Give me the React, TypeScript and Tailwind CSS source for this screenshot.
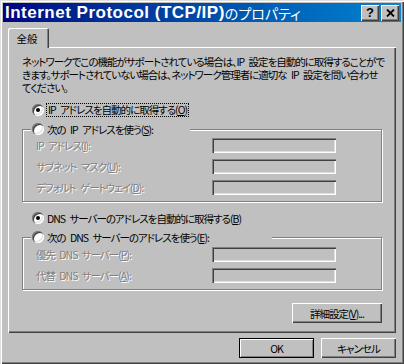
import React from 'react';

const jp = "font-['Noto_Sans_CJK_JP',sans-serif] [font-feature-settings:'palt']";
const dis = 'text-[#808080] [text-shadow:1px_1px_0_#ffffff]';
const raised =
  'bg-[#c0c0c0] shadow-[inset_1px_1px_0_#ffffff,inset_-1px_-1px_0_#404040,inset_-2px_-2px_0_#808080]';
const sunken =
  'bg-[#c0c0c0] shadow-[inset_1px_1px_0_#808080,inset_2px_2px_0_#404040,inset_-1px_-1px_0_#ffffff,inset_-2px_-2px_0_#dfdfdf]';
const etched = 'border border-[#808080] shadow-[inset_1px_1px_0_#ffffff,1px_1px_0_#ffffff]';

function Radio({ checked = false }: { checked?: boolean }) {
  return (
    <span className="flex items-center justify-center w-[12px] h-[12px] shrink-0 rounded-full bg-white shadow-[inset_1px_1px_0_#808080,inset_2px_2px_0_#404040,inset_-1px_-1px_0_#ffffff,inset_-2px_-2px_0_#dfdfdf]">
      {checked && <span className="w-[4px] h-[4px] rounded-full bg-black" />}
    </span>
  );
}

function FieldRow({ label }: { label: React.ReactNode }) {
  return (
    <div className="flex items-center h-[15px]">
      <span className={`w-[176px] whitespace-nowrap ${dis}`}>{label}</span>
      <div className={`w-[124px] h-[15px] ${sunken}`} />
    </div>
  );
}

function GroupHead({ width, children }: { width: string; children: React.ReactNode }) {
  return (
    <div className="-mt-[9px] h-[16px] flex">
      <div className={`ml-[8px] pl-[1px] flex items-center gap-[3px] bg-[#c0c0c0] ${width}`}>
        <Radio />
        <span className="whitespace-nowrap">{children}</span>
      </div>
    </div>
  );
}

export default function App() {
  return (
    <div
      className={`w-[404px] h-[364px] bg-[#c0c0c0] flex flex-col text-[10.5px] tracking-[-1px] [word-spacing:3px] leading-[13px] text-black ${jp} shadow-[inset_1px_1px_0_#dfdfdf,inset_2px_2px_0_#ffffff,inset_-1px_-1px_0_#404040,inset_-2px_-2px_0_#808080]`}
    >
      {/* title bar */}
      <div className="mx-[3px] mt-[3px] h-[19px] flex items-center bg-linear-to-r from-[#000080] to-[#1084d0] pl-[2px] pr-[2px] tracking-normal [word-spacing:0px]">
        <span className="text-white font-bold text-[17px] tracking-[0.5px] leading-none font-['Liberation_Sans',sans-serif] whitespace-nowrap">
          Internet Protocol (TCP/IP)
        </span>
        <span className="text-white text-[14px] leading-none font-['Noto_Sans_CJK_JP',sans-serif] whitespace-nowrap">
          のプロパティ
        </span>
        <div className="ml-auto flex gap-[2px]">
          <div className={`w-[18px] h-[16px] flex items-center justify-center ${raised}`}>
            <span className="font-bold text-[13px] leading-none font-['Liberation_Sans',sans-serif] text-black -mt-[1px]">?</span>
          </div>
          <div className={`w-[18px] h-[16px] flex items-center justify-center ${raised}`}>
            <svg width="9" height="8" viewBox="0 0 9 8">
              <path d="M1 0.5 L8 7.5 M8 0.5 L1 7.5" stroke="#000" strokeWidth="1.8" />
            </svg>
          </div>
        </div>
      </div>

      {/* tab */}
      <div className="ml-[8px] mt-[6px] flex">
        <div className="relative z-10 -mb-[1px] w-[41px] h-[20px] bg-[#c0c0c0] flex items-center justify-center shadow-[inset_1px_1px_0_#ffffff,inset_-1px_0_0_#404040,inset_-2px_0_0_#808080] rounded-tl-[2px] rounded-tr-[2px] pr-[3px] tracking-normal">
          全般
        </div>
      </div>

      {/* panel */}
      <div className="ml-[8px] w-[388px] h-[286px] px-[14px] pt-[8px] flex flex-col shadow-[inset_1px_1px_0_#ffffff,inset_-1px_-1px_0_#404040,inset_-2px_-2px_0_#808080]">
        <div className="whitespace-nowrap">
          <div>ネットワークでこの機能がサポートされている場合は、IP 設定を自動的に取得することがで</div>
          <div>きます。サポートされていない場合は、ネットワーク管理者に適切な IP 設定を問い合わせ</div>
          <div>てください。</div>
        </div>

        <div className="mt-[8px] h-[16px] flex items-center pl-[10px] gap-[2px]">
          <Radio checked />
          <span className="whitespace-nowrap border border-dotted border-black px-[1px] leading-[12px]">
            IP アドレスを自動的に取得する(<u>O</u>)
          </span>
        </div>

        <div className={`mt-[11px] h-[73px] ${etched}`}>
          <GroupHead width="w-[159px]">
            次の IP アドレスを使う(<u>S</u>):
          </GroupHead>
          <div className="mt-[1px] pl-[13px] flex flex-col gap-[6px]">
            <FieldRow label={<>IP アドレス(<u>I</u>):</>} />
            <FieldRow label={<>サブネット マスク(<u>U</u>):</>} />
            <FieldRow label={<>デフォルト ゲートウェイ(<u>D</u>):</>} />
          </div>
        </div>

        <div className="mt-[8px] h-[16px] flex items-center pl-[10px] gap-[3px]">
          <Radio checked />
          <span className="whitespace-nowrap">
            DNS サーバーのアドレスを自動的に取得する(<u>B</u>)
          </span>
        </div>

        <div className={`mt-[11px] h-[53px] ${etched}`}>
          <GroupHead width="w-[241px]">
            次の DNS サーバーのアドレスを使う(<u>E</u>):
          </GroupHead>
          <div className="mt-[2px] pl-[13px] flex flex-col gap-[6px]">
            <FieldRow label={<>優先 DNS サーバー(<u>P</u>):</>} />
            <FieldRow label={<>代替 DNS サーバー(<u>A</u>):</>} />
          </div>
        </div>

        <div className="mt-[13px] flex justify-end">
          <button className={`w-[90px] h-[20px] flex items-center justify-center ${raised}`}>
            詳細設定(<u>V</u>)...
          </button>
        </div>
      </div>

      {/* buttons */}
      <div className="mt-[5px] pr-[8px] flex justify-end gap-[7px]">
        <button className="w-[75px] h-[20px] flex items-center justify-center bg-[#c0c0c0] border border-black shadow-[inset_1px_1px_0_#ffffff,inset_-1px_-1px_0_#808080]">
          OK
        </button>
        <button className={`w-[75px] h-[20px] flex items-center justify-center ${raised}`}>
          キャンセル
        </button>
      </div>
    </div>
  );
}
